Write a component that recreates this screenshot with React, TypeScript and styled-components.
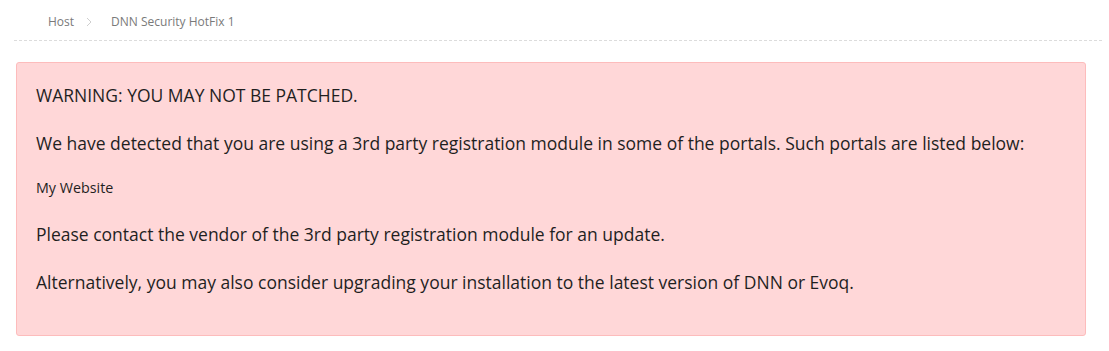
import React from "react";
import styled, { createGlobalStyle } from "styled-components";

const Global = createGlobalStyle`
  html, body { margin: 0; padding: 0; background: #fff; }
  body { font-family: "Open Sans", "Liberation Sans", sans-serif; }
`;

const Page = styled.div`
  padding: 0 5px 0 14px;
`;

const Breadcrumb = styled.nav`
  display: flex;
  align-items: center;
  height: 41px;
  padding-left: 34px;
  font-size: 12px;
  color: #7a7a7a;
  background-image: repeating-linear-gradient(
    to right,
    #dcdcdc 0,
    #dcdcdc 3px,
    transparent 3px,
    transparent 5px
  );
  background-size: 100% 1px;
  background-position: left bottom;
  background-repeat: no-repeat;
`;

const Crumb = styled.span`
  line-height: 18px;
  margin-top: 3px;
`;

const Sep = styled.span`
  display: inline-flex;
  margin: 3px 19px 0 12px;
  color: #cfcfcf;
`;

const Alert = styled.div`
  margin: 21px 18px 0 2px;
  background: #ffd7d8;
  border: 1px solid #fdbcbc;
  border-radius: 3px;
  padding: 20px 20px 17px 19px;
  color: #1f1f1f;
`;

const Para = styled.p<{ $small?: boolean }>`
  margin: 0 0 ${(p) => (p.$small ? "25px" : "24px")};
  font-size: ${(p) => (p.$small ? "14.3px" : "17.5px")};
  line-height: ${(p) => (p.$small ? "18px" : "24px")};
`;

export default function App() {
  return (
    <>
      <Global />
      <Page>
        <Breadcrumb>
          <Crumb>Host</Crumb>
          <Sep>
            <svg width="6" height="10" viewBox="0 0 6 10" fill="none">
              <path d="M1 1l4 4-4 4" stroke="currentColor" strokeWidth="1" />
            </svg>
          </Sep>
          <Crumb>DNN Security HotFix 1</Crumb>
        </Breadcrumb>
        <Alert>
          <Para>WARNING: YOU MAY NOT BE PATCHED.</Para>
          <Para>
            We have detected that you are using a 3rd party registration module in some of the
            portals. Such portals are listed below:
          </Para>
          <Para $small>My Website</Para>
          <Para>Please contact the vendor of the 3rd party registration module for an update.</Para>
          <Para>
            Alternatively, you may also consider upgrading your installation to the latest version
            of DNN or Evoq.
          </Para>
        </Alert>
      </Page>
    </>
  );
}
